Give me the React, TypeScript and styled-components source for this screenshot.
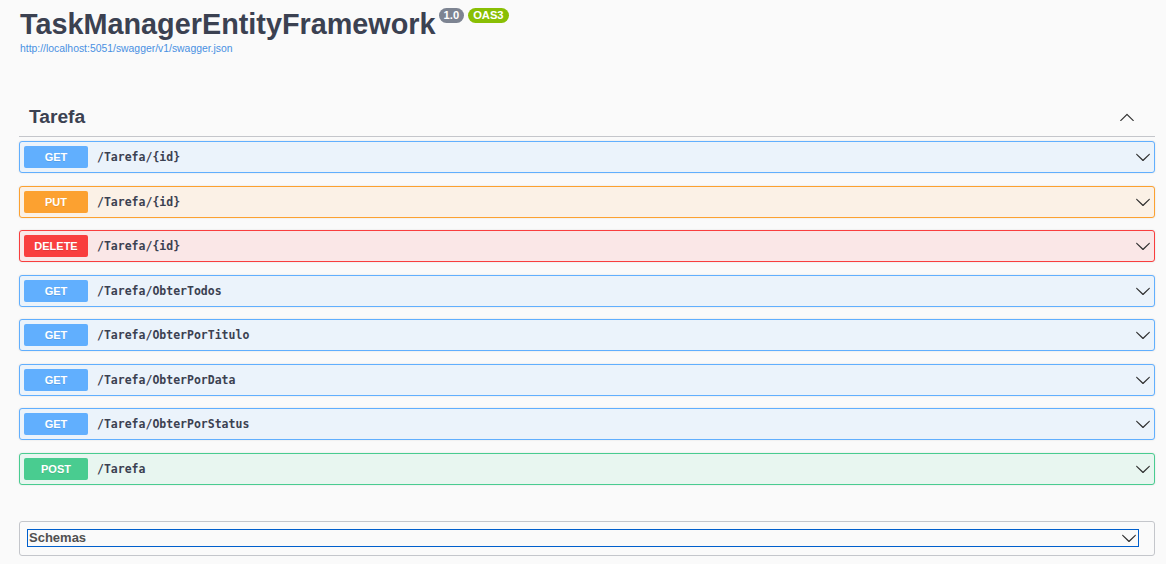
import styled, { createGlobalStyle } from 'styled-components'

const GlobalStyle = createGlobalStyle`
  html, body {
    margin: 0;
    padding: 0;
    background: #fafafa;
  }
  body {
    font-family: "Liberation Sans", Arial, sans-serif;
    color: #3b4151;
  }
`

const methodColors: Record<string, { main: string; bg: string }> = {
  GET: { main: '#61affe', bg: '#ebf3fb' },
  PUT: { main: '#fca130', bg: '#fbf1e6' },
  DELETE: { main: '#f93e3e', bg: '#fae7e7' },
  POST: { main: '#49cc90', bg: '#e8f6f0' },
}

const Page = styled.div`
  margin: 0 11px 0 19px;
  padding-top: 6px;
`

const Info = styled.div`
  padding-left: 1px;
  margin-bottom: 44px;
`

const TitleRow = styled.div`
  display: flex;
  align-items: flex-start;
  gap: 3px;
`

const Title = styled.h2`
  margin: 0;
  font-size: 28.8px;
  font-weight: 700;
  line-height: 36px;
  color: #3b4151;
`

const Badges = styled.div`
  display: flex;
  gap: 4px;
  margin-top: 2px;
`

const Badge = styled.span<{ $bg: string }>`
  display: inline-block;
  height: 15px;
  line-height: 15px;
  padding: 0 5px;
  border-radius: 8px;
  background: ${p => p.$bg};
  color: #fff;
  font-size: 11.2px;
  font-weight: 700;
  font-family: "Liberation Sans", Arial, sans-serif;
`

const Link = styled.a`
  display: block;
  margin-top: 1px;
  font-size: 10.4px;
  color: #4990e2;
  text-decoration: none;
`

const TagHeader = styled.div`
  display: flex;
  align-items: center;
  justify-content: space-between;
  height: 38px;
  padding: 0 20px 0 10px;
  border-bottom: 1px solid #c4c6cb;
  margin-bottom: 4px;
`

const TagTitle = styled.h3`
  margin: 0;
  font-size: 19.2px;
  font-weight: 700;
  color: #3b4151;
`

const Arrow = styled.svg`
  width: 16px;
  height: 16px;
  fill: #303030;
  display: block;
`

const OpBlock = styled.div<{ $method: string }>`
  display: flex;
  align-items: center;
  height: 30px;
  padding: 0 3px 0 4px;
  margin-bottom: 12.57px;
  border: 1px solid ${p => methodColors[p.$method].main};
  border-radius: 3px;
  background: ${p => methodColors[p.$method].bg};
  box-shadow: 0 0 2px rgba(0, 0, 0, 0.12);
`

const Method = styled.span<{ $method: string }>`
  width: 64px;
  height: 22px;
  line-height: 22px;
  flex-shrink: 0;
  text-align: center;
  border-radius: 2px;
  background: ${p => methodColors[p.$method].main};
  color: #fff;
  font-size: 11px;
  font-weight: 700;
  text-shadow: 0 1px 0 rgba(0, 0, 0, 0.1);
`

const Path = styled.span`
  flex: 1;
  padding-left: 9px;
  font-family: "DejaVu Sans Mono", "Liberation Mono", monospace;
  font-size: 11.5px;
  font-weight: 700;
  color: #3b4151;
`

const Models = styled.section`
  margin-top: 36px;
  border: 1px solid #c4c6cb;
  border-radius: 3px;
  padding: 7px 15px 8px 7px;
`

const ModelsButton = styled.div`
  display: flex;
  align-items: center;
  justify-content: space-between;
  height: 16px;
  border: 1px solid #005fcc;
  padding: 0 1px 0 1px;
`

const ModelsTitle = styled.span`
  font-size: 13px;
  font-weight: 700;
  color: #505050;
  font-family: "Liberation Sans", Arial, sans-serif;
`

const DownArrow = () => (
  <Arrow viewBox="0 0 20 20">
    <path d="M17.418 6.109c.272-.268.709-.268.979 0s.271.701 0 .969l-7.908 7.83c-.27.268-.707.268-.979 0l-7.908-7.830c-.27-.268-.27-.701 0-.969.271-.268.709-.268.979 0L10 13.25l7.418-7.141z" />
  </Arrow>
)

const UpArrow = () => (
  <Arrow viewBox="0 0 20 20">
    <path d="M17.418 14.908c.272.268.709.268.979 0s.271-.701 0-.969l-7.908-7.83c-.27-.268-.707-.268-.979 0l-7.908 7.83c-.27.268-.27.701 0 .969.271.268.709.268.979 0L10 7.767l7.418 7.141z" />
  </Arrow>
)

const operations = [
  { method: 'GET', path: '/Tarefa/{id}' },
  { method: 'PUT', path: '/Tarefa/{id}' },
  { method: 'DELETE', path: '/Tarefa/{id}' },
  { method: 'GET', path: '/Tarefa/ObterTodos' },
  { method: 'GET', path: '/Tarefa/ObterPorTitulo' },
  { method: 'GET', path: '/Tarefa/ObterPorData' },
  { method: 'GET', path: '/Tarefa/ObterPorStatus' },
  { method: 'POST', path: '/Tarefa' },
]

const App = () => {
  return (
    <>
      <GlobalStyle />
      <Page>
        <Info>
          <TitleRow>
            <Title>TaskManagerEntityFramework</Title>
            <Badges>
              <Badge $bg="#7d8492">1.0</Badge>
              <Badge $bg="#89bf04">OAS3</Badge>
            </Badges>
          </TitleRow>
          <Link href="#">http://localhost:5051/swagger/v1/swagger.json</Link>
        </Info>
        <TagHeader>
          <TagTitle>Tarefa</TagTitle>
          <UpArrow />
        </TagHeader>
        {operations.map((op, i) => (
          <OpBlock key={i} $method={op.method}>
            <Method $method={op.method}>{op.method}</Method>
            <Path>{op.path}</Path>
            <DownArrow />
          </OpBlock>
        ))}
        <Models>
          <ModelsButton>
            <ModelsTitle>Schemas</ModelsTitle>
            <DownArrow />
          </ModelsButton>
        </Models>
      </Page>
    </>
  )
}

export default App
